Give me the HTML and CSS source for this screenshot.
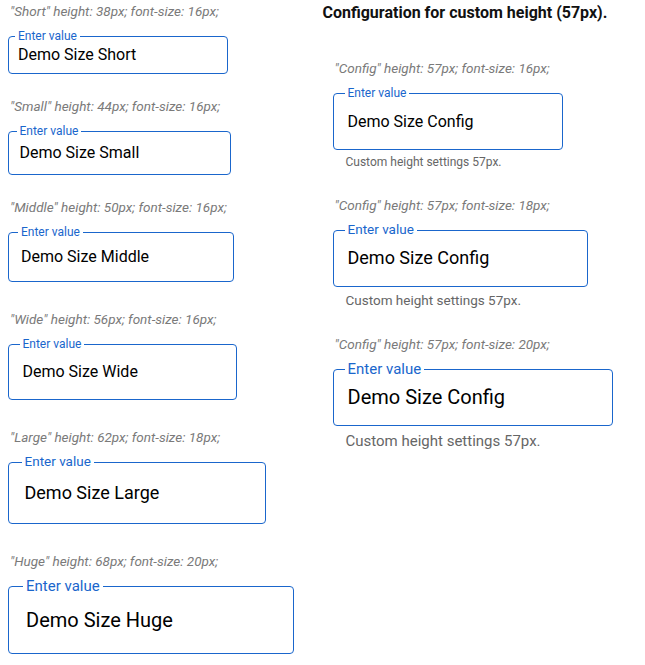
FILE: index.html
```html
<!DOCTYPE html>
<html lang="en">
<head>
<meta charset="utf-8">
<title>Input sizes</title>
<link rel="stylesheet" href="styles.css">
</head>
<body>
<main class="page">
  <section class="column column--sizes">
    <div class="item size-short">
      <p class="caption">"Short" height: 38px; font-size: 16px;</p>
      <div class="field">
        <label class="field-label">Enter value</label>
        <input class="field-input" type="text" value="Demo Size Short">
      </div>
    </div>
    <div class="item size-small">
      <p class="caption">"Small" height: 44px; font-size: 16px;</p>
      <div class="field">
        <label class="field-label">Enter value</label>
        <input class="field-input" type="text" value="Demo Size Small">
      </div>
    </div>
    <div class="item size-middle">
      <p class="caption">"Middle" height: 50px; font-size: 16px;</p>
      <div class="field">
        <label class="field-label">Enter value</label>
        <input class="field-input" type="text" value="Demo Size Middle">
      </div>
    </div>
    <div class="item size-wide">
      <p class="caption">"Wide" height: 56px; font-size: 16px;</p>
      <div class="field">
        <label class="field-label">Enter value</label>
        <input class="field-input" type="text" value="Demo Size Wide">
      </div>
    </div>
    <div class="item size-large">
      <p class="caption">"Large" height: 62px; font-size: 18px;</p>
      <div class="field">
        <label class="field-label">Enter value</label>
        <input class="field-input" type="text" value="Demo Size Large">
      </div>
    </div>
    <div class="item size-huge">
      <p class="caption">"Huge" height: 68px; font-size: 20px;</p>
      <div class="field">
        <label class="field-label">Enter value</label>
        <input class="field-input" type="text" value="Demo Size Huge">
      </div>
    </div>
  </section>

  <section class="column column--config">
    <h2 class="heading">Configuration for custom height (57px).</h2>
    <div class="config-list">
      <div class="item config config-16">
        <p class="caption">"Config" height: 57px; font-size: 16px;</p>
        <div class="field">
          <label class="field-label">Enter value</label>
          <input class="field-input" type="text" value="Demo Size Config">
        </div>
        <p class="helper">Custom height settings 57px.</p>
      </div>
      <div class="item config config-18">
        <p class="caption">"Config" height: 57px; font-size: 18px;</p>
        <div class="field">
          <label class="field-label">Enter value</label>
          <input class="field-input" type="text" value="Demo Size Config">
        </div>
        <p class="helper">Custom height settings 57px.</p>
      </div>
      <div class="item config config-20">
        <p class="caption">"Config" height: 57px; font-size: 20px;</p>
        <div class="field">
          <label class="field-label">Enter value</label>
          <input class="field-input" type="text" value="Demo Size Config">
        </div>
        <p class="helper">Custom height settings 57px.</p>
      </div>
    </div>
  </section>
</main>
</body>
</html>
```

FILE: styles.css
```css
html, body {
  margin: 0;
  background: #fff;
}

body {
  font-family: Roboto, "Noto Sans", Arial, sans-serif;
  color: #000;
}

.page {
  display: grid;
  grid-template-columns: 1fr 1fr;
  padding: 3px 8px 0;
}

.column--sizes {
  padding-top: 1px;
}

.item {
  --fs: 16px;
  --h: 38px;
  --pad: 9px;
  --after: 25px;
  margin-bottom: var(--after);
}

.size-short  { --h: 38px; --pad: 9px;   --after: 25px; }
.size-small  { --h: 44px; --pad: 10.5px; --after: 25px; }
.size-middle { --h: 50px; --pad: 12px;  --after: 30px; }
.size-wide   { --h: 56px; --pad: 13.5px; --after: 30px; }
.size-large  { --h: 62px; --pad: 15.5px; --after: 30px; --fs: 18px; }
.size-huge   { --h: 68px; --pad: 17px;  --after: 0; --fs: 20px; }

.caption {
  margin: 0 0 17px;
  padding-left: 2px;
  font-size: 13.5px;
  line-height: 15px;
  font-style: italic;
  color: #7a7a7a;
  white-space: nowrap;
}

.field {
  position: relative;
  display: flex;
  align-items: center;
  box-sizing: border-box;
  width: fit-content;
  height: var(--h);
  padding: 0 var(--pad) 1px;
  border: 1px solid #1a66cc;
  border-radius: 4px;
  font-size: var(--fs);
}

.field-label {
  position: absolute;
  top: -1px;
  left: calc(var(--pad) - 3px);
  transform: translateY(-50%);
  padding: 0 3px;
  background: #fff;
  font-size: 0.75em;
  line-height: 1;
  color: #1a66cc;
  white-space: nowrap;
}

.field-input {
  width: 12.5em;
  margin: 0;
  padding: 0;
  border: 0;
  outline: none;
  background: transparent;
  font: inherit;
  color: #000;
}

.heading {
  margin: 0 0 39px;
  font-size: 16px;
  font-weight: 700;
  color: #111;
}

.config-list {
  padding-left: 10px;
}

.config {
  --h: 57px;
  --pad: 14px;
  --after: 29px;
}

.config-16 { --fs: 16px; }
.config-18 { --fs: 18px; }
.config-20 { --fs: 20px; --after: 0; }

.helper {
  margin: 0.4em 0 0;
  padding-left: 13px;
  font-size: calc(var(--fs) * 0.75);
  color: #666;
}
```
